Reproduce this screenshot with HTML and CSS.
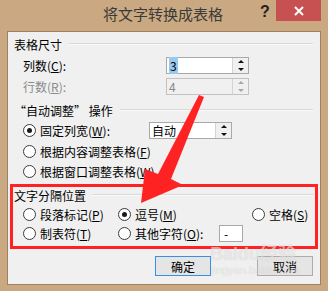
FILE: index.html
```html
<!DOCTYPE html>
<html lang="zh-CN">
<head>
  <meta charset="UTF-8" />
  <title>将文字转换成表格</title>
  <link rel="stylesheet" href="styles.css" />
</head>
<body>
<div class="window">
  <!-- 标题栏 -->
  <div class="titlebar">
    <span class="title">将文字转换成表格</span>
    <span class="help">?</span>
    <span class="close-btn">
      <svg width="10" height="10" viewBox="0 0 10 10"><path d="M1 1 L9 9 M9 1 L1 9" stroke="#fff" stroke-width="2"/></svg>
    </span>
  </div>

  <div class="panel">
    <div class="group-title">表格尺寸</div>
    <div class="row">
      <span class="field-label">列数(<u>C</u>):</span>
      <div class="spin">
        <span class="spin-value"><span class="sel">3</span></span>
        <span class="spin-btns"><i class="up"></i><i class="down"></i></span>
      </div>
    </div>
    <div class="row row-gap4 disabled">
      <span class="field-label">行数(<u>R</u>):</span>
      <div class="spin">
        <span class="spin-value">4</span>
        <span class="spin-btns"><i class="up"></i><i class="down"></i></span>
      </div>
    </div>

    <div class="group-title title-gap">“自动调整” 操作</div>
    <div class="row row-gap4">
      <span class="radio checked"></span>
      <span class="radio-label wide">固定列宽(<u>W</u>):</span>
      <div class="spin">
        <span class="spin-value">自动</span>
        <span class="spin-btns"><i class="up"></i><i class="down"></i></span>
      </div>
    </div>
    <div class="row row-gap4">
      <span class="radio"></span>
      <span class="radio-label">根据内容调整表格(<u>F</u>)</span>
    </div>
    <div class="row row-gap3">
      <span class="radio"></span>
      <span class="radio-label">根据窗口调整表格(<u>W</u>)</span>
    </div>

    <!-- 文字分隔位置 -->
    <div class="sep-box">
      <div class="group-title inner">文字分隔位置</div>
      <div class="sep-row first">
        <div class="opt col1"><span class="radio"></span><span class="radio-label">段落标记(<u>P</u>)</span></div>
        <div class="opt col2"><span class="radio checked"></span><span class="radio-label">逗号(<u>M</u>)</span></div>
        <div class="opt col3"><span class="radio"></span><span class="radio-label">空格(<u>S</u>)</span></div>
      </div>
      <div class="sep-row">
        <div class="opt col1"><span class="radio"></span><span class="radio-label">制表符(<u>T</u>)</span></div>
        <div class="opt col2">
          <span class="radio"></span><span class="radio-label other">其他字符(<u>O</u>):</span>
          <span class="char-box">-</span>
        </div>
      </div>
    </div>

    <div class="buttons">
      <button class="btn default">确定</button>
      <button class="btn">取消</button>
    </div>
  </div>

  <!-- 水印 -->
  <div class="watermark">
    <span class="wm-big">Baidu经验</span>
    <span class="wm-small">jingyan.baidu.com</span>
  </div>

  <!-- 红色箭头 -->
  <svg class="arrow" width="328" height="291" viewBox="0 0 328 291">
    <polygon points="199,95 204,97 171,179 183,185 141,203 145,169 158,174" fill="#ff2222"/>
  </svg>
</div>
</body>
</html>
```

FILE: styles.css
```css
* {
  box-sizing: border-box;
}
body {
  margin: 0;
  font-family: "Noto Sans CJK SC", "Liberation Sans", sans-serif;
  font-size: 12px;
  color: #000;
}

/* Window frame */
.window {
  position: relative;
  width: 328px;
  height: 291px;
  background: #caa982;
  overflow: hidden;
}

/* Title bar */
.titlebar {
  display: flex;
  height: 31px;
  padding-left: 70px;
}
.title {
  flex: 1;
  text-align: center;
  font-size: 15px;
  line-height: 28px;
  color: #3a3a3a;
}
.help {
  width: 18px;
  margin-right: 2px;
  font-family: "Liberation Sans", sans-serif;
  font-weight: bold;
  font-size: 16px;
  line-height: 24px;
  color: #222;
  text-align: center;
}
.close-btn {
  display: flex;
  align-items: center;
  justify-content: center;
  width: 45px;
  height: 21px;
  margin-right: 7px;
  background: #c75050;
}

/* Panel */
.panel {
  height: 254px;
  margin: 0 7px;
  border: 1px solid #9f8160;
  background: #f0f0f0;
}
.group-title {
  display: flex;
  align-items: center;
  height: 16px;
  margin-top: 4px;
  padding: 0 7px 0 6px;
  white-space: nowrap;
}
.group-title::after {
  content: "";
  flex: 1;
  height: 0;
  margin-left: 7px;
  border-top: 1px solid #d9d9d9;
  border-bottom: 1px solid #fafafa;
}
.title-gap {
  margin-top: 7px;
}

.row {
  display: flex;
  align-items: center;
  height: 17px;
  margin-top: 5px;
  padding-left: 15px;
}
.row-gap4 {
  margin-top: 4px;
}
.row-gap3 {
  margin-top: 3px;
}
.field-label {
  width: 143px;
}
.disabled {
  color: #8a8a8a;
}

/* Spin box */
.spin {
  display: flex;
  width: 83px;
  height: 17px;
  border: 1px solid #a9a9a9;
  background: #fff;
}
.spin-value {
  flex: 1;
  padding-left: 2px;
  line-height: 15px;
}
.sel {
  background: #99c9ef;
  padding: 0 1px;
}
.spin-btns {
  display: flex;
  flex-direction: column;
  justify-content: space-around;
  align-items: center;
  width: 16px;
  border-left: 1px solid #d4d4d4;
  background: #f0f0f0;
}
.spin-btns i {
  width: 0;
  height: 0;
  border-left: 3px solid transparent;
  border-right: 3px solid transparent;
}
.spin-btns .up {
  border-bottom: 3px solid #111;
}
.spin-btns .down {
  border-top: 3px solid #111;
}
.disabled .spin {
  background: #f0f0f0;
  border-color: #c2c2c2;
}
.disabled .spin-btns i {
  border-bottom-color: #a8a8a8;
  border-top-color: #a8a8a8;
}
.disabled .spin-btns .up {
  border-top: none;
}
.disabled .spin-btns .down {
  border-bottom: none;
}

/* Radios */
.radio {
  position: relative;
  flex: none;
  width: 13px;
  height: 13px;
  border: 1px solid #3c3c3c;
  border-radius: 50%;
  background: #fff;
}
.radio.checked::after {
  content: "";
  position: absolute;
  left: 3px;
  top: 3px;
  width: 5px;
  height: 5px;
  border-radius: 50%;
  background: #1a1a1a;
}
.radio-label {
  margin-left: 4px;
  white-space: nowrap;
}
.radio-label.wide {
  width: 109px;
}

/* Separator box */
.sep-box {
  margin: 4px 2px 0 2px;
  padding-bottom: 4px;
  border: 3px solid #ff2222;
}
.group-title.inner {
  margin-top: 0;
  padding: 0 1px;
}
.sep-row {
  display: flex;
  align-items: center;
  height: 17px;
  margin-top: 2px;
  padding-left: 10px;
}
.sep-row.first {
  margin-top: 3px;
}
.opt {
  display: flex;
  align-items: center;
}
.col1 {
  width: 95px;
}
.col2 {
  width: 134px;
}
.radio-label.other {
  width: 84px;
}
.char-box {
  width: 24px;
  height: 17px;
  border: 1px solid #a9a9a9;
  background: #fff;
  padding-left: 4px;
  line-height: 15px;
}

/* Buttons */
.buttons {
  display: flex;
  gap: 46px;
  margin-top: 7px;
  padding-left: 147px;
}
.btn {
  width: 56px;
  height: 20px;
  padding: 0;
  border: 1px solid #acacac;
  background: #e5e5e5;
  font-family: inherit;
  font-size: 12px;
  color: #000;
}
.btn.default {
  border-color: #3c8fe0;
}

/* Watermark */
.watermark {
  position: absolute;
  left: 210px;
  top: 245px;
  display: flex;
  flex-direction: column;
  color: rgba(255, 255, 255, 0.5);
  text-shadow: 0 0 1px rgba(120, 120, 120, 0.3);
  pointer-events: none;
}
.wm-big {
  font-family: "Liberation Sans", "Noto Sans CJK SC", sans-serif;
  font-weight: bold;
  font-size: 18px;
  line-height: 19px;
}
.wm-small {
  font-family: "Liberation Sans", sans-serif;
  font-size: 11px;
  line-height: 13px;
  padding-left: 1px;
}

/* Arrow */
.arrow {
  position: absolute;
  left: 0;
  top: 0;
  pointer-events: none;
}
```
